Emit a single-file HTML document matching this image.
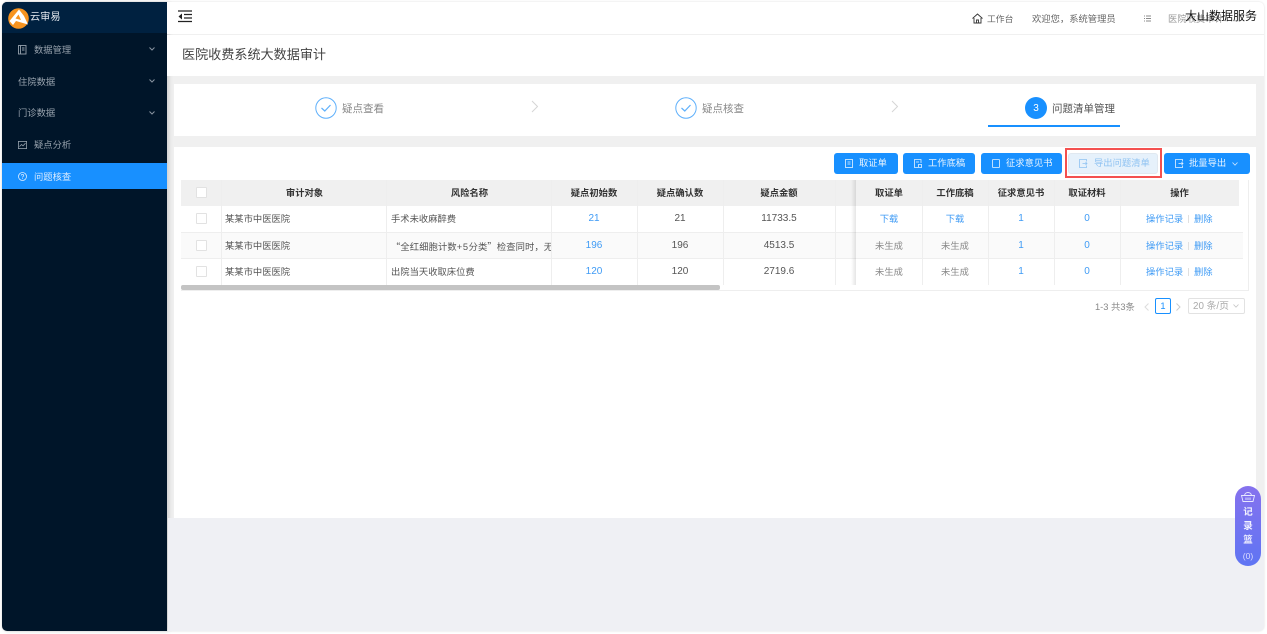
<!DOCTYPE html>
<html lang="zh-CN"><head><meta charset="utf-8"><title>云审易</title>
<style>
*{box-sizing:border-box}
html,body{margin:0;padding:0;width:1267px;height:634px;overflow:hidden;background:#fff}
body{font-family:"Liberation Sans","Noto Sans CJK SC",sans-serif;position:relative}
.a{position:absolute;white-space:nowrap}
.t{position:absolute;white-space:nowrap;line-height:14px;font-size:9.3px;color:#555}
.c{text-align:center}
.side{color:#97a2ad}
.hd{color:#333;font-weight:700;font-size:9.3px}
.blue{color:#3f9bf5}
.btn{position:absolute;top:153px;height:21px;background:#1890ff;border-radius:3px;color:#e9f4ff;font-size:9.3px;line-height:21px;white-space:nowrap}
.v{position:absolute;width:1px;background:#eee}
.h{position:absolute;height:1px;background:#eee}
.cb{position:absolute;left:196px;width:11px;height:11px;border:1px solid #e2e2e2;background:#fff;border-radius:1px}
svg{position:absolute;overflow:visible}
</style></head><body>

<!-- app frame -->
<div class="a" style="left:2px;top:2px;width:1262px;height:629px;background:#f0f0f0;border-radius:5px;overflow:hidden;box-shadow:0 0 2px #ddd"></div>

<!-- sidebar -->
<div class="a" style="left:2px;top:2px;width:165px;height:629px;background:#001529;border-radius:5px 0 0 5px;box-shadow:2px 0 4px rgba(0,0,0,.14)"></div>
<div class="a" style="left:2px;top:2px;width:165px;height:31px;background:#002140;border-radius:5px 0 0 0"></div>
<svg style="left:8px;top:8px" width="21" height="21" viewBox="0 0 21 21"><circle cx="10.500" cy="10.500" r="10.300" fill="#f7931e"/><path d="M1.500 13 L11 1.500 L16 8 L20 16.500 L8 13 L5 17 Z" fill="#fff"/><path d="M10.500 6.500 L13 12 L7.500 10.500Z" fill="#f7931e"/></svg>
<div class="t" style="left:30px;top:11px;font-size:10.200px;color:#e3e8ee">云审易</div>

<svg style="left:18px;top:45px" width="9" height="10" viewBox="0 0 9 10" fill="none" stroke="#97a2ad" stroke-width=".9"><rect x=".5" y=".5" width="7.500" height="8.500"/><path d="M2.500 .5V9M4 3H6.500M4 5H6.500"/></svg>
<div class="t side" style="left:34px;top:43px">数据管理</div>
<div class="t side" style="left:18px;top:75px">住院数据</div>
<div class="t side" style="left:18px;top:106px">门诊数据</div>
<svg style="left:149px;top:47px" width="6" height="4" viewBox="0 0 6 4" fill="none" stroke="#8894a0" stroke-width="1"><path d="M.5 .5L3 3L5.500 .5"/></svg>
<svg style="left:149px;top:79px" width="6" height="4" viewBox="0 0 6 4" fill="none" stroke="#8894a0" stroke-width="1"><path d="M.5 .5L3 3L5.500 .5"/></svg>
<svg style="left:149px;top:111px" width="6" height="4" viewBox="0 0 6 4" fill="none" stroke="#8894a0" stroke-width="1"><path d="M.5 .5L3 3L5.500 .5"/></svg>
<svg style="left:18px;top:141px" width="9" height="8" viewBox="0 0 9 8" fill="none" stroke="#97a2ad" stroke-width=".8"><rect x=".4" y=".4" width="8.200" height="7.200"/><path d="M1.500 5.500L3.500 3.500L5 4.800L7.500 2.200"/></svg>
<div class="t side" style="left:34px;top:138px">疑点分析</div>
<div class="a" style="left:2px;top:163px;width:165px;height:26px;background:#1890ff"></div>
<svg style="left:18px;top:172px" width="9" height="9" viewBox="0 0 9 9" fill="none" stroke="#dcecff" stroke-width=".8"><circle cx="4.500" cy="4.500" r="4"/><path d="M3.300 3.500C3.300 2 5.700 2 5.700 3.500C5.700 4.500 4.500 4.500 4.500 5.500M4.500 6.300V7"/></svg>
<div class="t" style="left:34px;top:170px;color:#dcecff">问题核查</div>

<!-- top bar -->
<div class="a" style="left:167px;top:2px;width:1097px;height:32px;background:#fff;border-radius:0 5px 0 0"></div>
<svg style="left:178px;top:10px" width="14" height="13" viewBox="0 0 14 13" fill="none" stroke="#222" stroke-width="1.200"><path d="M0 1H14M6 4.500H14M6 8H14M0 11.500H14"/><path d="M4 3.500V9.500L.5 6.500Z" fill="#222" stroke="none"/></svg>
<svg style="left:972px;top:13px" width="11" height="11" viewBox="0 0 11 11" fill="none" stroke="#333" stroke-width=".9"><path d="M.5 5.500L5.500 1L10.500 5.500M2 5V10H9V5M4.500 10V7H6.500V10"/></svg>
<div class="t" style="left:987px;top:12px;color:#666;font-size:8.800px">工作台</div>
<div class="t" style="left:1032px;top:12px;color:#666">欢迎您，系统管理员</div>
<svg style="left:1144px;top:15px" width="7" height="7" viewBox="0 0 7 7" fill="none" stroke="#666" stroke-width=".8"><path d="M0 1H1M2 1H7M0 3.500H1M2 3.500H7M0 6H1M2 6H7"/></svg>
<div class="t" style="left:1168px;top:12px;color:#999">医院收费审计</div>
<div class="t" style="left:1185px;top:9px;font-size:12px;color:#111">大山数据服务</div>

<!-- title -->
<div class="a" style="left:167px;top:35px;width:1097px;height:41px;background:#fff"></div>
<div class="t" style="left:182px;top:48px;font-size:13.100px;color:#444">医院收费系统大数据审计</div>

<!-- steps -->
<div class="a" style="left:174px;top:84px;width:1082px;height:52px;background:#fff"></div>
<svg style="left:315px;top:97px" width="22" height="22" viewBox="0 0 22 22" fill="none" stroke="#5fb0fb"><circle cx="11" cy="11" r="10.200"/><path d="M6.500 11L9.800 14L15.500 8" stroke-width="1.200"/></svg>
<div class="t" style="left:342px;top:102px;font-size:10.500px;color:#888">疑点查看</div>
<svg style="left:531px;top:100px" width="8" height="13" viewBox="0 0 8 13" fill="none" stroke="#d5d5d5"><path d="M1 1L6.500 6.500L1 12"/></svg>
<svg style="left:675px;top:97px" width="22" height="22" viewBox="0 0 22 22" fill="none" stroke="#5fb0fb"><circle cx="11" cy="11" r="10.200"/><path d="M6.500 11L9.800 14L15.500 8" stroke-width="1.200"/></svg>
<div class="t" style="left:702px;top:102px;font-size:10.500px;color:#888">疑点核查</div>
<svg style="left:891px;top:100px" width="8" height="13" viewBox="0 0 8 13" fill="none" stroke="#d5d5d5"><path d="M1 1L6.500 6.500L1 12"/></svg>
<div class="a c" style="left:1025px;top:97px;width:22px;height:22px;border-radius:50%;background:#1890ff;color:#fff;font-size:10px;line-height:23px">3</div>
<div class="t" style="left:1052px;top:102px;font-size:10.500px;color:#555">问题清单管理</div>
<div class="a" style="left:988px;top:125px;width:132px;height:2px;background:#1890ff"></div>

<!-- card -->
<div class="a" style="left:174px;top:147px;width:1082px;height:371px;background:#fff"></div>
<div class="a" style="left:168px;top:518px;width:1096px;height:113px;background:#eff0f4;border-radius:0 0 5px 0"></div>

<!-- buttons -->
<div class="btn" style="left:834px;width:64px;padding-left:25px">取证单</div>
<svg style="left:845px;top:159px" width="8" height="9" viewBox="0 0 8 9" fill="none" stroke="#e9f4ff" stroke-width=".8"><rect x=".5" y=".5" width="7" height="8"/><path d="M2.500 3H5.500M2.500 5H5.500"/></svg>
<div class="btn" style="left:903px;width:72px;padding-left:25px">工作底稿</div>
<svg style="left:914px;top:159px" width="8" height="9" viewBox="0 0 8 9" fill="none" stroke="#e9f4ff" stroke-width=".8"><path d="M7 4V.5H.5V8.500H4M2 3H5M4.500 5.500H7.500V8.500H4.500Z"/></svg>
<div class="btn" style="left:981px;width:81px;padding-left:25px">征求意见书</div>
<svg style="left:992px;top:159px" width="8" height="9" viewBox="0 0 8 9" fill="none" stroke="#e9f4ff" stroke-width=".8"><rect x=".5" y=".5" width="7" height="8" rx=".5"/></svg>
<div class="a" style="left:1065px;top:148px;width:97px;height:30px;border:2px solid #f4504f"></div>
<div class="btn" style="left:1068px;width:90px;padding-left:25px;background:#e6f1fb;color:#8fc2f2;border:1px solid #e0e8f0;line-height:19px">导出问题清单</div>
<svg style="left:1079px;top:159px" width="8" height="9" viewBox="0 0 8 9" fill="none" stroke="#8fc2f2" stroke-width=".8"><path d="M7.500 2.500V.5H.5V8.500H7.500V6.500M3.500 4.500H8M6.500 3L8 4.500L6.500 6"/></svg>
<div class="btn" style="left:1164px;width:86px;padding-left:25px">批量导出</div>
<svg style="left:1175px;top:159px" width="8" height="9" viewBox="0 0 8 9" fill="none" stroke="#e9f4ff" stroke-width=".8"><path d="M7.500 2.500V.5H.5V8.500H7.500V6.500M3.500 4.500H8M6.500 3L8 4.500L6.500 6"/></svg>
<svg style="left:1232px;top:162px" width="6" height="4" viewBox="0 0 6 4" fill="none" stroke="#cfe6ff" stroke-width=".8"><path d="M.5 .5L3 3.200L5.500 .5"/></svg>

<!-- table -->
<div class="a" style="left:181px;top:180px;width:1068px;height:111px;border:1px solid #eee;border-top:0;border-left:0"></div>
<div class="a" style="left:181px;top:180px;width:1058px;height:26px;background:#f0f0f0"></div>
<div class="a" style="left:181px;top:232px;width:1062px;height:27px;background:#fafafa"></div>
<div class="h" style="left:181px;top:232px;width:1062px"></div>
<div class="h" style="left:181px;top:258px;width:1062px"></div>
<div class="v" style="left:221px;top:180px;height:105px"></div>
<div class="v" style="left:386px;top:180px;height:105px"></div>
<div class="v" style="left:551px;top:180px;height:105px"></div>
<div class="v" style="left:637px;top:180px;height:105px"></div>
<div class="v" style="left:723px;top:180px;height:105px"></div>
<div class="v" style="left:835px;top:180px;height:105px"></div>
<div class="a" style="left:181px;top:285px;width:539px;height:5px;background:#c4c4c4;border-radius:2px"></div>

<div class="a" style="left:851px;top:180px;width:5px;height:105px;background:linear-gradient(to right,rgba(0,0,0,0),rgba(0,0,0,.1))"></div>
<div class="v" style="left:922px;top:180px;height:105px"></div>
<div class="v" style="left:988px;top:180px;height:105px"></div>
<div class="v" style="left:1054px;top:180px;height:105px"></div>
<div class="v" style="left:1120px;top:180px;height:105px"></div>

<div class="cb" style="top:187px"></div>
<div class="cb" style="top:213px"></div>
<div class="cb" style="top:240px"></div>
<div class="cb" style="top:266px"></div>

<div class="t c hd" style="left:222px;width:165px;top:186px">审计对象</div>
<div class="t c hd" style="left:387px;width:165px;top:186px">风险名称</div>
<div class="t c hd" style="left:551px;width:86px;top:186px">疑点初始数</div>
<div class="t c hd" style="left:637px;width:86px;top:186px">疑点确认数</div>
<div class="t c hd" style="left:723px;width:112px;top:186px">疑点金额</div>
<div class="t c hd" style="left:856px;width:66px;top:186px">取证单</div>
<div class="t c hd" style="left:922px;width:66px;top:186px">工作底稿</div>
<div class="t c hd" style="left:988px;width:66px;top:186px">征求意见书</div>
<div class="t c hd" style="left:1054px;width:66px;top:186px">取证材料</div>
<div class="t c hd" style="left:1120px;width:119px;top:186px">操作</div>

<!-- row 1 -->
<div class="t" style="left:225px;top:212px">某某市中医医院</div>
<div class="t" style="left:391px;top:212px">手术未收麻醉费</div>
<div class="t c blue" style="left:551px;width:86px;top:212px;font-size:10px">21</div>
<div class="t c" style="left:637px;width:86px;top:212px;font-size:10px">21</div>
<div class="t c" style="left:723px;width:112px;top:212px;font-size:10px">11733.5</div>
<div class="t c blue" style="left:856px;width:66px;top:212px">下载</div>
<div class="t c blue" style="left:922px;width:66px;top:212px">下载</div>
<div class="t c blue" style="left:988px;width:66px;top:212px;font-size:10px">1</div>
<div class="t c blue" style="left:1054px;width:66px;top:212px;font-size:10px">0</div>
<div class="t blue" style="left:1146px;top:212px">操作记录</div>
<div class="a" style="left:1188px;top:215px;width:1px;height:8px;background:#e0e0e0"></div>
<div class="t blue" style="left:1194px;top:212px">删除</div>

<!-- row 2 -->
<div class="t" style="left:225px;top:239px">某某市中医医院</div>
<div class="a" style="left:391px;top:239px;width:160px;height:14px;overflow:hidden"><div class="t" style="left:0;top:0;letter-spacing:.1px"><span style="font-family:'Noto Sans CJK SC',sans-serif">“</span>全红细胞计数<span style="letter-spacing:.6px">+5</span>分类<span style="font-family:'Noto Sans CJK SC',sans-serif">”</span>检查同时，无</div></div>
<div class="t c blue" style="left:551px;width:86px;top:239px;font-size:10px">196</div>
<div class="t c" style="left:637px;width:86px;top:239px;font-size:10px">196</div>
<div class="t c" style="left:723px;width:112px;top:239px;font-size:10px">4513.5</div>
<div class="t c" style="left:856px;width:66px;top:239px;color:#888">未生成</div>
<div class="t c" style="left:922px;width:66px;top:239px;color:#888">未生成</div>
<div class="t c blue" style="left:988px;width:66px;top:239px;font-size:10px">1</div>
<div class="t c blue" style="left:1054px;width:66px;top:239px;font-size:10px">0</div>
<div class="t blue" style="left:1146px;top:239px">操作记录</div>
<div class="a" style="left:1188px;top:242px;width:1px;height:8px;background:#e0e0e0"></div>
<div class="t blue" style="left:1194px;top:239px">删除</div>

<!-- row 3 -->
<div class="t" style="left:225px;top:265px">某某市中医医院</div>
<div class="t" style="left:391px;top:265px">出院当天收取床位费</div>
<div class="t c blue" style="left:551px;width:86px;top:265px;font-size:10px">120</div>
<div class="t c" style="left:637px;width:86px;top:265px;font-size:10px">120</div>
<div class="t c" style="left:723px;width:112px;top:265px;font-size:10px">2719.6</div>
<div class="t c" style="left:856px;width:66px;top:265px;color:#888">未生成</div>
<div class="t c" style="left:922px;width:66px;top:265px;color:#888">未生成</div>
<div class="t c blue" style="left:988px;width:66px;top:265px;font-size:10px">1</div>
<div class="t c blue" style="left:1054px;width:66px;top:265px;font-size:10px">0</div>
<div class="t blue" style="left:1146px;top:265px">操作记录</div>
<div class="a" style="left:1188px;top:268px;width:1px;height:8px;background:#e0e0e0"></div>
<div class="t blue" style="left:1194px;top:265px">删除</div>

<!-- pagination -->
<div class="t" style="left:1095px;top:300px;color:#888">1-3 共3条</div>
<svg style="left:1144px;top:303px" width="5" height="8" viewBox="0 0 5 8" fill="none" stroke="#ddd"><path d="M4.500 .5L1 4L4.500 7.500"/></svg>
<div class="a c" style="left:1155px;top:298px;width:16px;height:16px;border:1px solid #1890ff;border-radius:2px;color:#1890ff;font-size:9.300px;line-height:14px">1</div>
<svg style="left:1176px;top:303px" width="5" height="8" viewBox="0 0 5 8" fill="none" stroke="#ccc"><path d="M.5 .5L4 4L.5 7.500"/></svg>
<div class="a" style="left:1188px;top:298px;width:57px;height:16px;border:1px solid #e2e2e2;border-radius:2px"></div>
<div class="t" style="left:1193px;top:300px;color:#aaa;font-size:9.800px">20 条/页</div>
<svg style="left:1233px;top:304px" width="6" height="4" viewBox="0 0 6 4" fill="none" stroke="#c4c4c4" stroke-width=".8"><path d="M.5 .5L3 3.200L5.500 .5"/></svg>

<!-- basket -->
<div class="a" style="left:1235px;top:486px;width:26px;height:80px;border-radius:13px;background:linear-gradient(#8672ee,#5f75f3)"></div>
<svg style="left:1241px;top:491px" width="14" height="12" viewBox="0 0 14 12" fill="none" stroke="#e8e8ff" stroke-width=".9"><path d="M3.500 4.500C4 .5 10 .5 10.500 4.500M.5 4.500H13.500L12 10.500H2Z"/><path d="M5 6.500V9M7 6.500V9M9 6.500V9"/></svg>
<div class="t c" style="left:1235px;width:26px;top:506px;font-size:9.500px;font-weight:700;color:#f2f2ff">记</div>
<div class="t c" style="left:1235px;width:26px;top:520px;font-size:9.500px;font-weight:700;color:#f2f2ff">录</div>
<div class="t c" style="left:1235px;width:26px;top:534px;font-size:9.500px;font-weight:700;color:#f2f2ff">篮</div>
<div class="t c" style="left:1235px;width:26px;top:549px;font-size:8.500px;color:#dcdcff">(0)</div>

</body></html>
